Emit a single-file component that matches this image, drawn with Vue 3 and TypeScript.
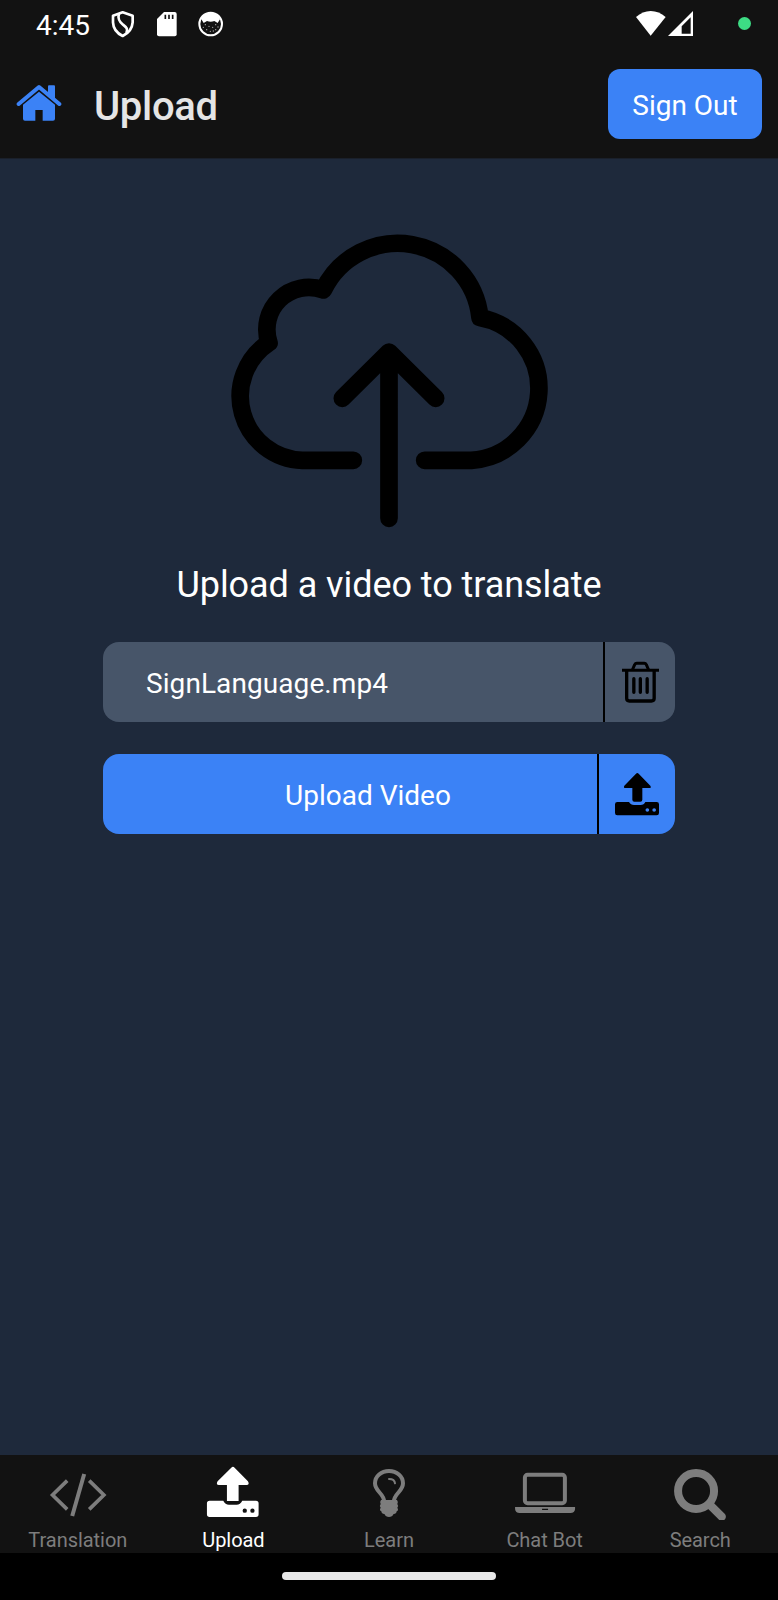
<script setup lang="ts">
import { ref } from 'vue'

interface Tab {
  id: string
  label: string
  viewBox: string
}

const tabs: Tab[] = [
  { id: 'translation', label: 'Translation', viewBox: '113.4 60 240 180' },
  { id: 'upload', label: 'Upload', viewBox: '580.2 60 240 180' },
  { id: 'learn', label: 'Learn', viewBox: '237 60 240 180' },
  { id: 'chat', label: 'Chat Bot', viewBox: '44.800 60 240 180' },
  { id: 'search', label: 'Search', viewBox: '509.800 60 240 180' },
]
const active = ref('upload')
const fileName = ref('SignLanguage.mp4')
</script>

<template>
  <div class="screen">
    <div class="status">
      <span class="time">4:45</span>
      <svg class="status-left" viewBox="320 0 360 144" width="120" height="48">
        <g fill="none" stroke="#fff" stroke-width="8" stroke-linejoin="round">
          <path d="M370 37 L341 47 V67 Q342 94 370 108 Q398 94 400 67 V47 Z" />
          <path d="M359 40 C354 58 361 66 371 74 C383 83 386 88 381 99" />
        </g>
        <path fill="#fff" d="M494 36 H526 Q532 36 532 42 V103 Q532 109 526 109 H479 Q473 109 473 103 V57 Z" />
        <path stroke="#121212" stroke-width="5" d="M498 44 V57 M509 44 V57 M520 44 V57" />
        <circle cx="634" cy="72" r="34" fill="#121212" stroke="#fff" stroke-width="6" />
        <path fill="#fff" d="M606 58 Q612 38 634 38 Q656 38 662 58 L655 69 L645 63 Q634 67 623 63 L613 69 Z" />
        <g fill="#aaa">
          <circle cx="618" cy="74" r="2" /><circle cx="649" cy="74" r="2" />
          <circle cx="629" cy="79" r="2" /><circle cx="640" cy="82" r="2" />
          <circle cx="622" cy="89" r="2" /><circle cx="649" cy="89" r="2" />
          <circle cx="633" cy="94" r="2" /><circle cx="612" cy="82" r="2" />
          <circle cx="656" cy="81" r="2" /><circle cx="642" cy="93" r="2" />
        </g>
      </svg>
      <svg class="status-right" viewBox="150 0 390 144" width="130" height="48">
        <path fill="#fff" d="M168 51 Q188 33 212 33 Q237 33 257 51 L212 107 Z" />
        <path fill="#fff" fill-rule="evenodd" d="M339 33 V108 H264 Z M332 52 L305 79 V101 H332 Z" />
        <circle cx="493.500" cy="70.500" r="19.500" fill="#3ddc84" />
      </svg>
    </div>

    <header class="header">
      <svg class="home" viewBox="48 250 138 117" width="46" height="39">
        <path fill="none" stroke="#3b82f6" stroke-width="12" stroke-linecap="round" stroke-linejoin="round" d="M56 313 L117 262 L178 313" />
        <path fill="#3b82f6" d="M144 260 Q144 257 147 257 H162 Q165 257 165 260 V303 L144 285 Z" />
        <path fill="#3b82f6" d="M117 276 L165 315 V357 Q165 363 159 363 H128 V331 H106 V363 H75 Q69 363 69 357 V315 Z" />
      </svg>
      <h1 class="title">Upload</h1>
      <button class="signout">Sign Out</button>
    </header>

    <main class="content">
      <svg class="cloud" viewBox="0 0 1020 960" width="340" height="320">
        <g fill="none" stroke="#000" stroke-width="53" stroke-linecap="round" stroke-linejoin="round">
          <path d="M400 721 H247 A192.500 192.500 0 0 1 147 368 A126 126 0 0 1 310 210 A248 248 0 0 1 780 293 A216 216 0 0 1 754 721 H614" />
          <path d="M507 396 V895 M367 535 L507 396 L647 535" />
        </g>
      </svg>
      <p class="prompt">Upload a video to translate</p>
      <div class="row file">
        <span class="name">{{ fileName }}</span>
        <span class="side trash">
          <svg viewBox="660 330 123 132" width="41" height="44">
            <g fill="none" stroke="#000">
              <path stroke-width="9" d="M666 360.500 H777" />
              <path stroke-width="9" stroke-linejoin="round" d="M697 360 L704 344 Q706 340 710 340 H733 Q737 340 739 344 L746 360" />
              <path stroke-width="10" d="M680 362 V445 Q680 453 688 453 H754 Q762.500 453 762.500 445 V362" />
              <path stroke-width="10" stroke-linecap="round" d="M701.500 386 V427 M721 386 V427 M741.500 386 V427" />
            </g>
          </svg>
        </span>
      </div>
      <div class="row send">
        <span class="name">Upload Video</span>
        <span class="side">
          <svg viewBox="642 663 138 132" width="46" height="44">
            <path d="M708 668 Q712 664 716 668 L751 704 Q755 711 748 711 H727 V746 Q727 752 721 752 H703 Q697 752 697 746 V711 H677 Q669 711 673 704 Z" />
            <path fill-rule="evenodd" d="M652 753 H687 Q692 762 702 762 H722 Q732 762 736 753 H770 Q777 753 777 760 V786 Q777 793 770 793 H652 Q645 793 645 786 V760 Q645 753 652 753 Z M736.500 777 a5.500 5.500 0 1 0 11 0 a5.500 5.500 0 1 0 -11 0 M757 777 a5.500 5.500 0 1 0 11 0 a5.500 5.500 0 1 0 -11 0" />
          </svg>
        </span>
      </div>
    </main>

    <nav class="tabs">
      <div v-for="tab in tabs" :key="tab.id" class="tab" :class="{ active: active === tab.id }" @click="active = tab.id">
        <svg :viewBox="tab.viewBox" width="80" height="60" fill="currentColor">
          <g v-if="tab.id === 'translation'" fill="none" stroke="currentColor" stroke-width="11">
            <path d="M201 122 L157 165 L201 208 M267 122 L311 165 L267 208" />
            <path stroke-width="12" d="M252 102 L216 228" />
          </g>
          <g v-else-if="tab.id === 'upload'">
            <path d="M695 83 Q700 78 705 83 L745 124 Q751 135 741 135 H717 V183 H682 V135 H658 Q648 135 654 124 Z" />
            <path fill-rule="evenodd" d="M630 182 H671 Q677 194 688 194 H711 Q722 194 728 182 H769 Q777 182 777 190 V223 Q777 231 769 231 H630 Q622 231 622 223 V190 Q622 182 630 182 Z M729 212 a6.500 6.500 0 1 0 13 0 a6.500 6.500 0 1 0 -13 0 M752 212 a6.500 6.500 0 1 0 13 0 a6.500 6.500 0 1 0 -13 0" />
          </g>
          <g v-else-if="tab.id === 'learn'">
            <path fill="none" stroke="currentColor" stroke-width="12" d="M343 186 C341 158 315 155 315 130 A42 37 0 0 1 399 130 C399 155 373 158 371 186" />
            <path fill="none" stroke="currentColor" stroke-width="6" stroke-linecap="round" d="M357 117 Q374 117 375 130" />
            <path d="M333 180 H381 Q386 187 382 192 Q387 198 382 203 Q387 211 380 214 Q380 221 370 223 Q367 231 357 231 Q347 231 344 223 Q334 221 334 214 Q327 211 332 203 Q327 198 332 192 Q328 187 333 180 Z" />
          </g>
          <g v-else-if="tab.id === 'chat'">
            <rect x="104.500" y="104.500" width="120" height="85" rx="8" fill="none" stroke="currentColor" stroke-width="12" />
            <path fill-rule="evenodd" d="M75 201 H255 V207 Q254 219 241 219 H89 Q76 219 75 207 Z M156 206 V210 H174 V206 Z" />
          </g>
          <g v-else fill="none" stroke="currentColor">
            <circle cx="618" cy="153" r="54" stroke-width="24" />
            <path stroke-width="25" stroke-linecap="round" d="M661 196 L695 230" />
          </g>
        </svg>
        <span class="label">{{ tab.label }}</span>
      </div>
    </nav>
    <div class="gesture"><span class="pill"></span></div>
  </div>
</template>

<style>
body {
  background: #000;
}
</style>

<style scoped>
.screen {
  width: 778px;
  height: 1600px;
  display: flex;
  flex-direction: column;
  background: #1e293b;
  color: #fff;
  font-family: Roboto, "Liberation Sans", sans-serif;
  overflow: hidden;
}
.status {
  height: 48px;
  display: flex;
  align-items: center;
  background: #121212;
  flex: none;
}
.time {
  width: 70px;
  padding-left: 36px;
  font-size: 28px;
  line-height: 46px;
  padding-top: 3px;
}
.status-right {
  margin-left: auto;
  margin-right: 18px;
}
.header {
  height: 111px;
  flex: none;
  display: flex;
  align-items: center;
  background: #121212;
  border-bottom: 1px solid #1a202b;
  padding: 0 16px;
  box-sizing: border-box;
}
.home {
  margin-bottom: 2px;
}
.title {
  margin: 7px 0 0 32px;
  font-size: 40px;
  line-height: 48px;
  font-weight: 500;
  letter-spacing: -0.300px;
  color: #e5e5e5;
}
.signout {
  width: 154px;
  height: 70px;
  margin: 1px 0 0 auto;
  padding: 2px 0 0;
  border: 0;
  border-radius: 12px;
  background: #3b82f6;
  color: #fff;
  font: 400 28px/70px Roboto, "Liberation Sans", sans-serif;
}
.content {
  flex: 1;
  display: flex;
  flex-direction: column;
  align-items: center;
  padding-top: 61px;
}
.cloud {
  display: block;
  margin-left: 2px;
}
.prompt {
  margin: 23px 0 35px;
  font-size: 36px;
  line-height: 44px;
  letter-spacing: -0.060px;
}
.row {
  width: 572px;
  height: 80px;
  display: flex;
  border-radius: 16px;
  font-size: 28px;
  line-height: 84px;
  overflow: hidden;
}
.name {
  flex: 1;
}
.side {
  width: 76px;
  height: 80px;
  border-left: 2px solid #000;
  display: flex;
  align-items: center;
  justify-content: center;
}
.file {
  background: #475569;
}
.file .name {
  padding-left: 43px;
  letter-spacing: 0.080px;
}
.trash {
  width: 70px;
}
.trash svg {
  margin-left: 1px;
}
.send {
  margin-top: 32px;
  background: #3b82f6;
}
.send svg {
  margin-bottom: 1px;
}
.send .name {
  text-align: center;
  padding-left: 36px;
}
.tabs {
  height: 98px;
  flex: none;
  display: grid;
  grid-template-columns: repeat(5, 1fr);
  background: #121212;
  color: #7d7d7d;
}
.tab {
  display: flex;
  flex-direction: column;
  align-items: center;
  padding-top: 5px;
}
.tab.active {
  color: #fff;
}
.label {
  margin-top: 8px;
  font-size: 20px;
  line-height: 24px;
  letter-spacing: -0.050px;
}
.gesture {
  height: 47px;
  flex: none;
  background: #000;
  display: flex;
  justify-content: center;
  padding-top: 19px;
  box-sizing: border-box;
}
.pill {
  width: 214px;
  height: 8px;
  border-radius: 4px;
  background: #e8e8e8;
}
</style>
